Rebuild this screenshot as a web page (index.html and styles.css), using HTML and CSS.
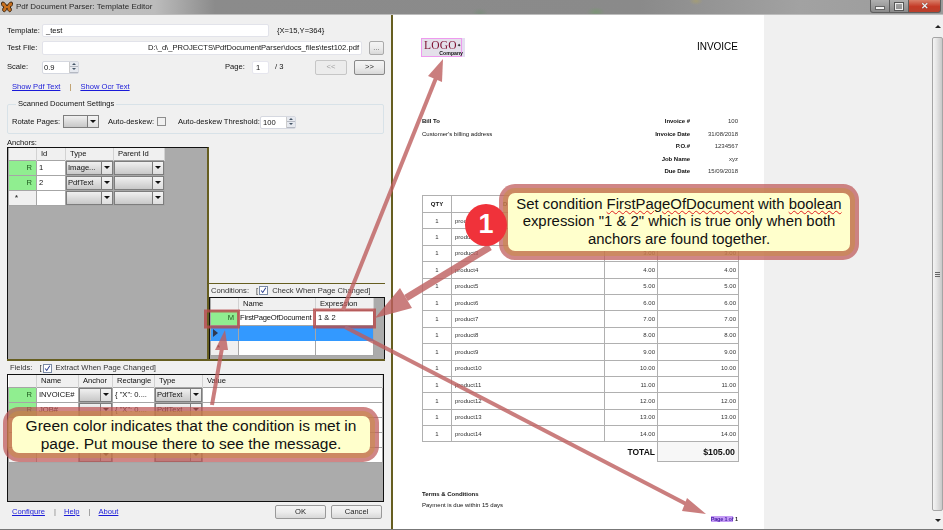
FILE: index.html
```html
<!DOCTYPE html>
<html lang="en">
<head>
<meta charset="utf-8">
<title>Pdf Document Parser: Template Editor</title>
<link rel="stylesheet" href="styles.css">
</head>
<body>
<div class="window">
  <header class="titlebar">
    <svg class="app-icon" viewBox="0 0 12 12" width="12" height="12"><path d="M6 5C4 1 1 0 .5 2c-.3 2 .7 3.500 2.500 4C1.500 7 1 9.500 2.500 10.500 4 11.500 5.500 9 6 7c.5 2 2 4.500 3.500 3.500C11 9.500 10.500 7 9 6c1.800-.5 2.800-2 2.500-4C11 0 8 1 6 5z" fill="#c8701e" stroke="#3a2410" stroke-width="1"/></svg>
    <span class="title-text">Pdf Document Parser: Template Editor</span>
    <div class="win-buttons">
      <span class="win-btn win-min"><i></i></span>
      <span class="win-btn win-max"><i></i></span>
      <span class="win-btn win-close">✕</span>
    </div>
  </header>
  <main class="client">
    <section class="left">
      <div class="row row-template">
        <label class="lbl">Template:</label>
        <span class="input w-template">_test</span>
        <span class="coords">{X=15,Y=364}</span>
      </div>
      <div class="row row-file">
        <label class="lbl">Test File:</label>
        <span class="input w-file right">D:\_d\_PROJECTS\PdfDocumentParser\docs_files\test102.pdf</span>
        <span class="btn btn-dots">...</span>
      </div>
      <div class="row row-scale">
        <label class="lbl">Scale:</label>
        <span class="spin w-scale"><b>0.9</b><span class="spin-btns"><i class="up"></i><i class="down"></i></span></span>
        <label class="lbl-page">Page:</label>
        <span class="input w-page">1</span>
        <span class="of">/ 3</span>
        <span class="btn btn-prev">&lt;&lt;</span>
        <span class="btn btn-next">&gt;&gt;</span>
      </div>
      <div class="row row-links">
        <a class="link">Show Pdf Text</a><span class="sep sep-a">|</span><a class="link">Show Ocr Text</a>
      </div>
      <fieldset class="group">
        <legend>Scanned Document Settings</legend>
        <div class="group-row">
          <label class="lbl-rotate">Rotate Pages:</label>
          <span class="combo w-rotate"><span class="combo-body"></span><span class="combo-arrow"></span></span>
          <label class="lbl-desk">Auto-deskew:</label>
          <span class="check"></span>
          <label class="lbl-thr">Auto-deskew Threshold:</label>
          <span class="spin w-thr"><b>100</b><span class="spin-btns"><i class="up"></i><i class="down"></i></span></span>
        </div>
      </fieldset>
      <div class="cap-anchors">Anchors:</div>
      <div class="split">
        <div class="grid-box anchors">
          <table class="dg dg-anchors">
            <colgroup><col class="c-rh"><col class="c-id"><col class="c-type"><col class="c-parent"></colgroup>
            <tr class="hd"><th></th><th>Id</th><th>Type</th><th>Parent Id</th></tr>
            <tr><td class="rh ok">R</td><td>1</td><td class="cc"><span class="combo"><span class="combo-body">Image...</span><span class="combo-arrow"></span></span></td><td class="cc"><span class="combo"><span class="combo-body"></span><span class="combo-arrow"></span></span></td></tr>
            <tr><td class="rh ok">R</td><td>2</td><td class="cc"><span class="combo"><span class="combo-body">PdfText</span><span class="combo-arrow"></span></span></td><td class="cc"><span class="combo"><span class="combo-body"></span><span class="combo-arrow"></span></span></td></tr>
            <tr><td class="rh star">*</td><td></td><td class="cc"><span class="combo"><span class="combo-body"></span><span class="combo-arrow"></span></span></td><td class="cc"><span class="combo"><span class="combo-body"></span><span class="combo-arrow"></span></span></td></tr>
          </table>
        </div>
        <div class="cond-col">
          <div class="cap-cond">
            <span>Conditions:</span><span class="bracket">[</span><span class="check on"><svg viewBox="0 0 9 9" width="7" height="7"><path d="M1.500 4.500l2 2.500 4-6" fill="none" stroke="#2a3f8f" stroke-width="1.300"/></svg></span><span>Check When Page Changed]</span>
          </div>
          <div class="grid-box conditions">
            <table class="dg dg-cond">
              <colgroup><col class="c-rh"><col class="c-name"><col class="c-expr"></colgroup>
              <tr class="hd"><th></th><th>Name</th><th>Expression</th></tr>
              <tr><td class="rh ok">M</td><td class="tight">FirstPageOfDocument</td><td>1 &amp; 2</td></tr>
              <tr class="sel"><td class="rh cur"><i class="cursor"></i></td><td></td><td></td></tr>
              <tr><td class="rh star">*</td><td></td><td></td></tr>
            </table>
          </div>
        </div>
      </div>
      <div class="cap-fields">
        <span>Fields:</span><span class="bracket">[</span><span class="check on"><svg viewBox="0 0 9 9" width="7" height="7"><path d="M1.500 4.500l2 2.500 4-6" fill="none" stroke="#2a3f8f" stroke-width="1.300"/></svg></span><span>Extract When Page Changed]</span>
      </div>
      <div class="grid-box fields">
        <table class="dg dg-fields">
          <colgroup><col class="c-rh"><col class="c-fname"><col class="c-anchor"><col class="c-rect"><col class="c-ftype"><col></colgroup>
          <tr class="hd"><th></th><th>Name</th><th>Anchor</th><th>Rectangle</th><th>Type</th><th>Value</th></tr>
          <tr><td class="rh ok">R</td><td>INVOICE#</td><td class="cc"><span class="combo"><span class="combo-body"></span><span class="combo-arrow"></span></span></td><td>{ "X": 0....</td><td class="cc"><span class="combo"><span class="combo-body">PdfText</span><span class="combo-arrow"></span></span></td><td></td></tr>
          <tr><td class="rh ok">R</td><td>JOB#</td><td class="cc"><span class="combo"><span class="combo-body"></span><span class="combo-arrow"></span></span></td><td>{ "X": 0....</td><td class="cc"><span class="combo"><span class="combo-body">PdfText</span><span class="combo-arrow"></span></span></td><td></td></tr>
          <tr><td class="rh"></td><td></td><td class="cc"><span class="combo"><span class="combo-body"></span><span class="combo-arrow"></span></span></td><td></td><td class="cc"><span class="combo"><span class="combo-body"></span><span class="combo-arrow"></span></span></td><td></td></tr>
          <tr><td class="rh"></td><td></td><td class="cc"><span class="combo"><span class="combo-body"></span><span class="combo-arrow"></span></span></td><td></td><td class="cc"><span class="combo"><span class="combo-body"></span><span class="combo-arrow"></span></span></td><td></td></tr>
          <tr><td class="rh"></td><td></td><td class="cc"><span class="combo"><span class="combo-body"></span><span class="combo-arrow"></span></span></td><td></td><td class="cc"><span class="combo"><span class="combo-body"></span><span class="combo-arrow"></span></span></td><td></td></tr>
        </table>
      </div>
      <div class="row row-foot">
        <a class="link">Configure</a><span class="sep sep-b">|</span><a class="link">Help</a><span class="sep sep-b">|</span><a class="link">About</a>
        <span class="btn btn-ok">OK</span>
        <span class="btn btn-cancel">Cancel</span>
      </div>
    </section>
    <div class="splitter"></div>
    <section class="viewer">
      <article class="page">
        <div class="page-head">
          <div class="logo"><span class="logo-word">LOGO</span><span class="logo-plus">✦</span><span class="logo-co">Company</span></div>
          <div class="inv-title">INVOICE</div>
        </div>
        <div class="bill">
          <div class="bill-to"><div class="b">Bill To</div><div>Customer's billing address</div></div>
          <dl class="meta">
            <dt>Invoice #</dt><dd>100</dd>
            <dt>Invoice Date</dt><dd>31/08/2018</dd>
            <dt>P.O.#</dt><dd>1234567</dd>
            <dt>Job Name</dt><dd>xyz</dd>
            <dt>Due Date</dt><dd>15/09/2018</dd>
          </dl>
        </div>
        <table class="items">
          <colgroup><col class="i-q"><col class="i-d"><col class="i-p"><col class="i-t"></colgroup>
          <tr class="i-hd"><th>QTY</th><th><span class="th-d">D</span></th><th></th><th></th></tr>
          <tr><td>1</td><td>product1</td><td></td><td></td></tr>
          <tr><td>1</td><td>product2</td><td></td><td></td></tr>
          <tr><td>1</td><td>product3</td><td>3.00</td><td>3.00</td></tr>
          <tr><td>1</td><td>product4</td><td>4.00</td><td>4.00</td></tr>
          <tr><td>1</td><td>product5</td><td>5.00</td><td>5.00</td></tr>
          <tr><td>1</td><td>product6</td><td>6.00</td><td>6.00</td></tr>
          <tr><td>1</td><td>product7</td><td>7.00</td><td>7.00</td></tr>
          <tr><td>1</td><td>product8</td><td>8.00</td><td>8.00</td></tr>
          <tr><td>1</td><td>product9</td><td>9.00</td><td>9.00</td></tr>
          <tr><td>1</td><td>product10</td><td>10.00</td><td>10.00</td></tr>
          <tr><td>1</td><td>product11</td><td>11.00</td><td>11.00</td></tr>
          <tr><td>1</td><td>product12</td><td>12.00</td><td>12.00</td></tr>
          <tr><td>1</td><td>product13</td><td>13.00</td><td>13.00</td></tr>
          <tr><td>1</td><td>product14</td><td>14.00</td><td>14.00</td></tr>
          <tr class="i-total"><td colspan="3">TOTAL</td><td>$105.00</td></tr>
        </table>
        <div class="terms"><div class="b">Terms &amp; Conditions</div><div>Payment is due within 15 days</div></div>
        <div class="page-no"><mark>Page 1 of</mark> 1</div>
      </article>
      <div class="scroll">
        <span class="sb-arrow up"></span>
        <span class="sb-thumb"><i></i></span>
        <span class="sb-arrow down"></span>
      </div>
    </section>
  </main>
  <div class="bottom-edge"></div>
</div>

<svg class="annot" viewBox="0 0 943 530" width="943" height="530">
  <g class="annot-g">
    <rect class="hl" x="205.500" y="311" width="33" height="16"/>
    <rect class="hl" x="314.500" y="310" width="60" height="17"/>
    <path class="shaft" d="M343 310L436 78"/>
    <polygon class="head" points="443,59 428,76 442,82"/>
    <path class="shaft" d="M345 327L690 506"/>
    <polygon class="head" points="706,514 687,498 682,511"/>
    <path class="shaft" d="M212 405L222 348"/>
    <polygon class="head" points="225,330 215,350 228,350"/>
    <path class="shaft thick" d="M406 298L490 247"/>
    <polygon class="head" points="375,318 400,288 412,308"/>
  </g>
</svg>
<div class="callout call-top"><p>Set condition <span class="sp">FirstPageOfDocument</span> with <span class="sp">boolean</span> expression "1 &amp; 2" which is true only when both anchors are found together.</p></div>
<div class="badge">1</div>
<div class="callout call-bottom"><p>Green color indicates that the condition is met in page. Put mouse there to see the message.</p></div>
</body>
</html>
```
FILE: styles.css
```css
* { box-sizing: border-box; }
html, body { margin: 0; padding: 0; width: 943px; height: 530px; overflow: hidden; }
body { position: relative; font: 7.6px/10px "Liberation Sans", Arial, sans-serif; color: #111; background: #f0f0f0; }

.window { width: 943px; height: 530px; display: flex; flex-direction: column; filter: blur(.25px); }

/* title bar */
.titlebar {
  height: 15px; flex: none; display: flex; align-items: center; padding-bottom: 1px;
  border-bottom: 1px solid #bdbdbd;
  background:
    radial-gradient(ellipse 8px 5px at 480px 13px, #7d8c7e, transparent),
    radial-gradient(ellipse 9px 5px at 596px 12px, #7c9476, transparent),
    radial-gradient(ellipse 7px 4px at 696px 1px, #a39c78, transparent),
    linear-gradient(90deg, #c6c6c6 0, #bcbcbc 155px, #8b8b8b 215px, #8a8a8a 640px, #a2a2a2 800px, #9b9b9b 943px);
}
.app-icon { margin: 0 3px 0 1px; flex: none; }
.title-text { font-size: 8px; color: #2a2a2a; }
.win-buttons { margin-left: auto; margin-right: 2px; display: flex; height: 13px; align-self: flex-start; }
.win-btn { display: flex; align-items: center; justify-content: center; height: 13px; border: 1px solid #5d5d5d; border-top: 0; background: linear-gradient(#b0b0b0, #8a8a8a); }
.win-min { width: 20px; border-radius: 0 0 0 3px; }
.win-min i { width: 8px; height: 2px; margin-top: 4px; background: #f2f2f2; box-shadow: 0 0 0 1px #666; }
.win-max { width: 19px; border-left: 0; }
.win-max i { width: 8px; height: 7px; border: 1px solid #eee; box-shadow: 0 0 0 1px #555; }
.win-close { width: 32px; border-left: 0; border-radius: 0 0 3px 0; background: linear-gradient(#d9806a, #c43a26 55%, #b9402c); color: #f2f2f2; font-size: 9px; font-weight: bold; text-shadow: 0 0 1px #333; }

/* main layout */
.client { flex: 1; display: flex; min-height: 0; }
.left { width: 391px; flex: none; padding: 9px 6px 0 7px; background: #f0f0f0; }
.splitter { width: 2px; flex: none; background: #665e20; }
.viewer { flex: 1; display: flex; min-width: 0; background: #f0f0f0; }
.bottom-edge { height: 1px; flex: none; background: #777; }

/* form rows */
.row { display: flex; align-items: center; }
.lbl { width: 35px; flex: none; }
.input { display: block; height: 13px; line-height: 12px; padding: 0 2px 0 3px; background: #fff; border: 1px solid #e2e3ea; border-radius: 2px; white-space: nowrap; overflow: hidden; }
.right { text-align: right; }
.row-template { height: 13px; }
.w-template { width: 227px; }
.coords { margin-left: 8px; }
.row-file { height: 14px; margin-top: 4px; }
.w-file { width: 320px; height: 14px; }
.btn { display: flex; align-items: center; justify-content: center; border: 1px solid #aaa; border-radius: 2px; background: linear-gradient(#f4f4f4, #ececec 50%, #d8d8d8); color: #222; }
.btn-dots { width: 15px; height: 14px; margin-left: 7px; color: #666; }
.row-scale { height: 14px; margin-top: 5px; }
.spin { display: flex; align-items: stretch; height: 13px; background: #fff; border: 1px solid #d5d8e0; border-radius: 2px; }
.spin b { flex: 1; font-weight: normal; padding-left: 1px; line-height: 11px; }
.spin-btns { width: 9px; display: flex; flex-direction: column; border-left: 1px solid #ccc; }
.spin-btns i { flex: 1; background: #e6e9ef; border-bottom: 1px solid #b5b9c2; display: flex; align-items: center; justify-content: center; }
.spin-btns .up::after { content: ""; border: 2px solid transparent; border-top: 0; border-bottom: 2px solid #456; }
.spin-btns .down::after { content: ""; border: 2px solid transparent; border-bottom: 0; border-top: 2px solid #456; }
.w-scale { width: 37px; }
.lbl-page { margin-left: 146px; width: 27px; }
.w-page { width: 17px; line-height: 12px; border-color: #e6e6ee; }
.of { margin-left: 6px; }
.btn-prev { width: 32px; height: 15px; margin-left: auto; color: #a0a0a0; background: #ececec; border-color: #c6c6c6; }
.btn-next { width: 31px; height: 15px; margin-left: 7px; border-color: #888; }
.row-links { height: 10px; margin-top: 8px; padding-left: 5px; }
.link { color: #1a1ad8; text-decoration: underline; }
.sep { color: #666; }
.sep-a { margin: 0 9px; color: #a87a30; }
.sep-b { margin: 0 9px; color: #777; }

.group { margin: 7px 0 0; padding: 0 0 0 4px; height: 35px; width: 377px; min-width: 0; border: 1px solid #d8e2e8; border-radius: 2px; }
.group legend { padding: 0 2px; margin-left: 4px; line-height: 10px; }
.group-row { display: flex; align-items: center; height: 25px; }
.lbl-rotate { width: 51px; flex: none; }
.lbl-desk { margin-left: 9px; width: 49px; flex: none; }
.check { display: inline-flex; align-items: center; justify-content: center; width: 9px; height: 9px; flex: none; background: #f0f0f0; border: 1px solid #8d8d8d; }
.check.on { background: #fff; border-color: #7a8aa5; }
.lbl-thr { margin-left: 12px; width: 82px; flex: none; }
.w-thr { width: 36px; margin-top: 1px; flex: none; }
.w-thr b { padding-left: 2px; }

.cap-anchors { height: 9px; margin-top: 4px; line-height: 9px; }

/* grids */
.split { display: flex; height: 214px; width: 378px; border-bottom: 2px solid #665e20; }
.grid-box { background: #ababab; border: 1px solid #111; overflow: hidden; }
.anchors { width: 202px; height: 100%; border-right: 2px solid #665e20; border-bottom: 0; }
.cond-col { flex: 1; display: flex; flex-direction: column; justify-content: flex-end; }
.cap-cond { display: flex; align-items: center; height: 14px; border-top: 1px solid #665e20; padding-left: 2px; color: #333; }
.bracket { margin-left: 7px; margin-right: 1px; }
.cap-cond .check, .cap-fields .check { margin-right: 4px; width: 9px; height: 9px; }
.conditions { flex: none; height: 62px; border-bottom: 0; }
.dg { border-collapse: collapse; table-layout: fixed; background: transparent; color: #111; }
.dg th { height: 12px; padding: 0 0 0 4px; font-weight: normal; text-align: left; background: #f0f0f0; border-right: 1px solid #d2d2d2; line-height: 10px; white-space: nowrap; overflow: hidden; }
.dg td { height: 15px; padding: 0 0 0 2px; background: #fff; border: 1px solid #a6a6a6; white-space: nowrap; overflow: hidden; }
.dg td.tight { padding-left: 1px; letter-spacing: -.2px; }
.dg td.rh { background: #f0f0f0; text-align: right; padding: 0 4px 0 0; color: #333; }
.dg td.ok { background: #90ee90; color: #1f5a1f; }
.dg td.star { text-align: left; padding-left: 6px; font-weight: bold; }
.dg td.cc { padding: 0; }
.dg .sel td { background: #3399ff; border-color: #3399ff #a6a6a6; }
.dg .sel td.cur { background: #3b9bfa; padding-left: 2px; text-align: left; }
.cursor { display: block; width: 0; height: 0; border: 4px solid transparent; border-left: 5px solid #303a50; border-right: 0; }
.c-rh { width: 28px; }
.c-id { width: 29px; }
.c-type { width: 48px; }
.c-parent { width: 51px; }
.c-name { width: 77px; }
.c-expr { width: 58px; }
.dg-fields { width: 375px; background: #fff; }
.c-fname { width: 42px; }
.c-anchor { width: 34px; }
.c-rect { width: 42px; }
.c-ftype { width: 48px; }

.combo { display: flex; width: 100%; height: 14px; border: 1px solid #7d7d7d; background: #ddd; }
.combo.w-rotate { width: 36px; height: 13px; flex: none; }
.combo-body { flex: 1; min-width: 0; padding-left: 1px; line-height: 12px; overflow: hidden; background: linear-gradient(#f0f0f0, #dcdcdc 50%, #c8c8c8); }
.combo-arrow { width: 11px; flex: none; border-left: 1px solid #7d7d7d; background: linear-gradient(#f4f4f4, #dedede); display: flex; align-items: center; justify-content: center; }
.combo-arrow::after { content: ""; border: 3px solid transparent; border-bottom: 0; border-top: 3px solid #111; }

.cap-fields { display: flex; align-items: center; height: 12px; margin-top: 1px; padding-left: 3px; color: #333; }
.cap-fields .bracket { margin-left: 7px; }
.fields { width: 377px; height: 128px; }
.row-foot { height: 14px; margin-top: 3px; padding-left: 5px; }
.row-foot .sep-b { margin: 0 8px 0 9px; }
.btn-ok { width: 51px; height: 14px; margin-left: auto; border-color: #999; }
.btn-cancel { width: 51px; height: 14px; margin: 0 3px 0 5px; border-color: #999; }

/* invoice */
.page { width: 371px; flex: none; padding: 23px 26px 0 29px; background: #fff; color: #111; font-size: 6px; line-height: 8px; }
.b { font-weight: bold; }
.page-head { display: flex; justify-content: space-between; align-items: flex-start; height: 79px; }
.logo { position: relative; width: 41px; height: 19px; margin-left: -1px; border: 1px solid #ee9aee; background: #e4e0ea; box-shadow: 3px 0 0 #e4def0; }
.logo-word { position: absolute; left: 2px; top: 1px; font: 11.500px/10px "Liberation Serif", serif; color: #7d1030; letter-spacing: .2px; }
.logo-plus { position: absolute; left: 35px; top: 3px; font-size: 5px; line-height: 6px; color: #111; }
.logo-co { position: absolute; right: -2px; bottom: 0; font: bold 5.200px/5px "Liberation Sans", sans-serif; color: #111; }
.inv-title { font-size: 10px; line-height: 12px; margin-top: 3px; color: #000; }
.bill { display: flex; justify-content: space-between; height: 78px; }
.bill-to div { height: 13px; line-height: 8px; }
.meta { margin: 0; display: grid; grid-template-columns: 80px 48px; grid-auto-rows: 12.600px; text-align: right; }
.meta dt { font-weight: bold; letter-spacing: -.05px; }
.meta dd { margin: 0; color: #333; }
.items { border-collapse: collapse; table-layout: fixed; width: 316px; }
.i-q { width: 29px; }
.i-d { width: 153px; }
.i-p { width: 53px; }
.i-t { width: 81px; }
.items td, .items th { border: 1px solid #b0b0b0; height: 16.400px; padding: 0 2px; text-align: right; color: #333; }
.items th { height: 17px; font-weight: bold; text-align: center; color: #111; }
.items th .th-d { display: block; text-align: left; padding-left: 49px; }
.items td:first-child { text-align: center; }
.items td:nth-child(2) { text-align: left; padding-left: 3px; }
.items .i-total td { height: 20px; border: 0; font-size: 8.500px; font-weight: bold; color: #111; text-align: right; }
.items .i-total td:last-child { border: 1px solid #b0b0b0; background: #f7f7f7; padding-right: 3px; font-size: 8.800px; }
.terms { margin-top: 28px; }
.terms div { height: 11px; }
.page-no { margin-top: 3px; text-align: right; font-weight: bold; font-size: 5.500px; color: #222; }
.page-no mark { background: #c59cf5; color: #4a1fa8; letter-spacing: -.2px; }

/* scrollbar */
.scroll { margin-left: auto; width: 11px; display: flex; flex-direction: column; }
.sb-arrow { height: 22px; flex: none; display: flex; align-items: center; justify-content: center; }
.sb-arrow.up::after { content: ""; border: 3px solid transparent; border-top: 0; border-bottom: 3px solid #222; }
.sb-arrow.down::after { content: ""; border: 3px solid transparent; border-bottom: 0; border-top: 3px solid #222; }
.sb-arrow.down { height: 18px; }
.sb-thumb { flex: 1; display: flex; align-items: center; justify-content: center; border: 1px solid #a5a5a5; border-radius: 2px; background: linear-gradient(90deg, #f4f4f4, #e8e8e8 35%, #c8c8c8); }
.sb-thumb i { width: 5px; height: 5px; border-top: 1px solid #666; border-bottom: 1px solid #666; background: linear-gradient(transparent 40%, #666 40%, #666 60%, transparent 60%); }

/* annotations over the app */
.annot { position: absolute; left: 0; top: 0; pointer-events: none; }
.annot-g { opacity: .8; }
.hl { fill: none; stroke: #b94a4a; stroke-width: 3; }
.shaft { fill: none; stroke: #be5e5e; stroke-width: 4; }
.thick { stroke-width: 7; }
.head { fill: #be5e5e; }
.callout { position: absolute; display: flex; align-items: center; justify-content: center; font-family: "Liberation Sans", Arial, sans-serif; color: #111; background: #ffffcc; border-radius: 7px; box-shadow: 0 0 0 5px rgba(200, 140, 70, .55), 0 0 0 9px rgba(190, 88, 88, .72); }
.callout p { margin: 0; text-align: center; }
.call-top { left: 508px; top: 193px; width: 342px; height: 58px; padding: 0 2px; font-size: 14.900px; line-height: 17.300px; }
.call-bottom { left: 12px; top: 416px; width: 358px; height: 37px; padding: 0 8px; font-size: 15.500px; line-height: 17.300px; }
.sp { text-decoration: underline wavy #e02020 1px; text-underline-offset: 1px; }
.badge { position: absolute; left: 465px; top: 204px; width: 42px; height: 42px; border-radius: 50%; background: #f0323a; color: #fff; font: bold 27px/40px "Liberation Sans", Arial, sans-serif; text-align: center; }
```
